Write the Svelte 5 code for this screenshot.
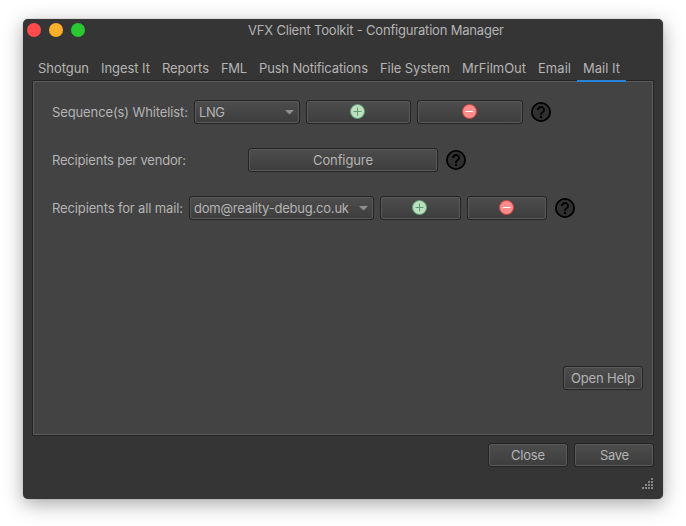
<script>
  const tabs = [
    { name: 'Shotgun', w: 51 },
    { name: 'Ingest It', w: 49 },
    { name: 'Reports', w: 47 },
    { name: 'FML', w: 26 },
    { name: 'Push Notifications', w: 109 },
    { name: 'File System', w: 70 },
    { name: 'MrFilmOut', w: 64 },
    { name: 'Email', w: 33 },
    { name: 'Mail It', w: 37 }
  ];
  let active = $state('Mail It');
</script>

{#snippet label(text, width)}
  <svg class="label" width={width} height="18" aria-hidden="false">
    <text x="0" y="13" textLength={width} lengthAdjust="spacing">{text}</text>
  </svg>
{/snippet}

{#snippet plus()}
  <svg class="icon" width="15" height="15" viewBox="0 0 15 15">
    <circle cx="7.5" cy="7.5" r="7" fill="#bae0bd" stroke="#5e9c76" stroke-width="1" />
    <path d="M3.5 7.5H11.5M7.5 3.5V11.5" stroke="#5e9c76" stroke-width="1" />
  </svg>
{/snippet}

{#snippet minus()}
  <svg class="icon" width="15" height="15" viewBox="0 0 15 15">
    <circle cx="7.5" cy="7.5" r="7" fill="#ff8c8c" stroke="#c74343" stroke-width="1" />
    <path d="M3.5 7.5H11.5" stroke="#fff" stroke-width="1" />
  </svg>
{/snippet}

{#snippet help()}
  <svg class="help" width="20" height="20" viewBox="2 2 20 20">
    <circle cx="12" cy="12" r="9.1" fill="#303030" stroke="#000" stroke-width="1.8" />
    <path
      d="M11 18h2v-2h-2v2zm1-12c-2.21 0-4 1.79-4 4h2c0-1.1.9-2 2-2s2 .9 2 2c0 2-3 1.75-3 5h2c0-2.25 3-2.5 3-5 0-2.21-1.79-4-4-4z"
      fill="#000"
    />
  </svg>
{/snippet}

{#snippet arrow()}
  <svg class="arrow" width="9" height="5" viewBox="0 0 9 5"><path d="M0 0H9L4.5 4.6Z" fill="#8f8f8f" /></svg>
{/snippet}

<main>
  <section class="window">
    <header>
      <div class="lights"><i class="red"></i><i class="amber"></i><i class="green"></i></div>
      <div class="title">{@render label('VFX Client Toolkit - Configuration Manager', 256)}</div>
    </header>
    <nav>
      {#each tabs as tab}
        <button class="tab" class:active={active === tab.name} onclick={() => (active = tab.name)}>
          {@render label(tab.name, tab.w)}
        </button>
      {/each}
    </nav>
    <div class="panel">
      <div class="row first">
        <div class="caption c1">{@render label('Sequence(s) Whitelist:', 136)}</div>
        <button class="btn combo w106">{@render label('LNG', 26)}{@render arrow()}</button>
        <button class="btn w105">{@render plus()}</button>
        <button class="btn w106">{@render minus()}</button>
        {@render help()}
      </div>
      <div class="row">
        <div class="caption c2">{@render label('Recipients per vendor:', 134)}</div>
        <button class="btn w190">{@render label('Configure', 60)}</button>
        {@render help()}
      </div>
      <div class="row">
        <div class="caption c3">{@render label('Recipients for all mail:', 131)}</div>
        <button class="btn combo w185">{@render label('dom@reality-debug.co.uk', 155)}{@render arrow()}</button>
        <button class="btn w81">{@render plus()}</button>
        <button class="btn w80">{@render minus()}</button>
        {@render help()}
      </div>
      <div class="bottom">
        <button class="btn w80">{@render label('Open Help', 64)}</button>
      </div>
    </div>
    <footer>
      <button class="btn w80">{@render label('Close', 34)}</button>
      <button class="btn w80">{@render label('Save', 29)}</button>
    </footer>
    <div class="gripbar">
      <svg width="11" height="11" viewBox="0 0 11 11" fill="#858585">
        {#each [0, 1, 2, 3] as r}
          {#each [0, 1, 2, 3] as c}
            {#if r + c >= 3}<rect x={c * 3} y={r * 3} width="2" height="2" />{/if}
          {/each}
        {/each}
      </svg>
    </div>
  </section>
</main>

<style>
  :global(body) { margin: 0; background: #fff; overflow: hidden; }
  main {
    box-sizing: border-box;
    width: 686px;
    height: 526px;
    padding: 19px 23px 27px;
    font: 13px Inter, "Liberation Sans", sans-serif;
  }
  .window {
    box-sizing: border-box;
    width: 640px;
    height: 480px;
    border-radius: 5px;
    background: #353535;
    box-shadow: 0 0 1px rgba(0, 0, 0, 0.5), 0 5px 20px rgba(0, 0, 0, 0.35);
    display: flex;
    flex-direction: column;
  }
  header { height: 38px; display: flex; }
  .lights { display: flex; gap: 8px; padding: 4px 0 0 4px; width: 221px; box-sizing: border-box; }
  .lights i { width: 14px; height: 14px; border-radius: 50%; }
  .red { background: #ff4a4b; }
  .amber { background: #ffb02a; }
  .green { background: #29c732; }
  .title { padding: 3px 0 0 4px; }
  .label { display: block; flex: none; overflow: visible; fill: #b4b4b4; }
  nav { height: 23px; padding-left: 9px; display: flex; flex: none; z-index: 1; }
  .tab {
    height: 25px;
    padding: 3px 6px 0;
    border: 0;
    border-bottom: 2px solid transparent;
    box-sizing: border-box;
    background: none;
    font: inherit;
    display: flex;
    flex: none;
  }
  .tab.active { border-color: #2a82da; }
  .panel {
    box-sizing: border-box;
    width: 622px;
    height: 356px;
    margin-left: 9px;
    border: 1px solid #232323;
    box-shadow: inset 0 0 0 1px #5b5b5b;
    background: #434343;
    display: flex;
    flex-direction: column;
    padding: 19px 10px 0 19px;
    flex: none;
  }
  .row { display: flex; height: 24px; gap: 6px; margin-bottom: 24px; align-items: center; }
  .caption { flex: none; box-sizing: border-box; padding-top: 2px; }
  .c1 { width: 136px; }
  .c2 { width: 190px; }
  .c3 { width: 131px; }
  .help { display: block; margin-left: 2px; flex: none; }
  .btn {
    height: 24px;
    flex: none;
    box-sizing: border-box;
    border: 1px solid #232323;
    border-radius: 3px;
    padding: 0;
    background: linear-gradient(#4d4d4d, #3d3d3d);
    box-shadow: inset 0 0 0 1px #5a5a5a;
    display: flex;
    align-items: center;
    justify-content: center;
    font: inherit;
  }
  .btn .label { margin-top: 2px; }
  .combo { justify-content: space-between; padding: 0 5px 0 4px; }
  .icon { display: block; margin: 0 2px 1px 0; }
  .w80 { width: 80px; }
  .w81 { width: 81px; }
  .w105 { width: 105px; }
  .w106 { width: 106px; }
  .w185 { width: 185px; }
  .w190 { width: 190px; }
  .bottom { display: flex; justify-content: flex-end; padding-top: 122px; margin-right: -1px; }
  .bottom { margin-right: 0; }
  footer { display: flex; justify-content: flex-end; gap: 6px; padding: 7px 9px 0 0; }
  .gripbar { display: flex; justify-content: flex-end; padding: 11px 10px 0 0; }
</style>
